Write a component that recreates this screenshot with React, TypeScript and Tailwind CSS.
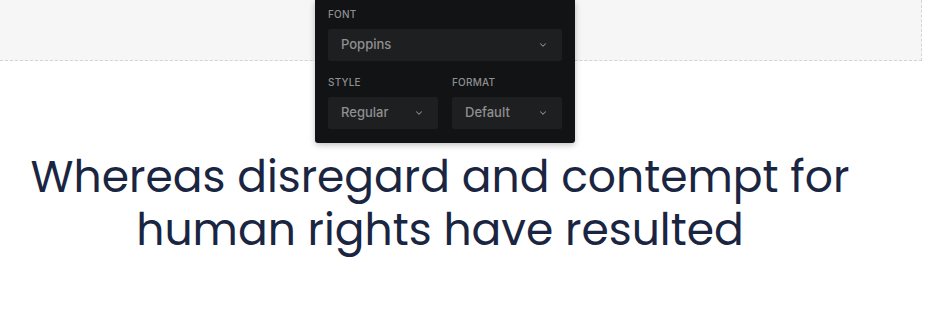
import { ChevronDown } from 'lucide-react'

function Select({ value, className }: { value: string; className?: string }) {
  return (
    <div className={`flex h-8 items-center justify-between rounded-[2px] bg-[#1e1f20] pl-[13px] pr-[14px] ${className ?? ''}`}>
      <span className="text-[13px] font-medium text-[#8e8f90]">{value}</span>
      <ChevronDown size={10} strokeWidth={2.5} className="text-[#8e8f90]" />
    </div>
  )
}

function Label({ children }: { children: string }) {
  return <div className="mb-[9px] text-[10px] font-medium uppercase leading-[12px] tracking-[0.02em] text-[#8e8f90]">{children}</div>
}

export default function App() {
  return (
    <div className="relative h-[318px] w-[936px] overflow-hidden bg-white font-['Inter',sans-serif]">
      <div className="h-[61px] w-[922px] border-b border-r border-dashed border-[#d4d4d4] bg-[#f6f6f6]" />

      <div className="absolute left-[315px] top-0 w-[260px] rounded-b-[3px] bg-[#111315] px-[13px] pb-[14px] pt-[8px] shadow-[0_2px_6px_rgba(0,0,0,0.25)]">
        <Label>Font</Label>
        <Select value="Poppins" />
        <div className="mt-[15px] grid grid-cols-2 gap-[14px]">
          <div>
            <Label>Style</Label>
            <Select value="Regular" />
          </div>
          <div>
            <Label>Format</Label>
            <Select value="Default" />
          </div>
        </div>
      </div>

      <h1 className="mt-[89px] w-[880px] text-center font-['Poppins','Inter',sans-serif] text-[44px] leading-[53px] text-[#1a2641]">
        <span className="block">Whereas disregard and contempt for</span>
        <span className="block">human rights have resulted</span>
      </h1>
    </div>
  )
}
